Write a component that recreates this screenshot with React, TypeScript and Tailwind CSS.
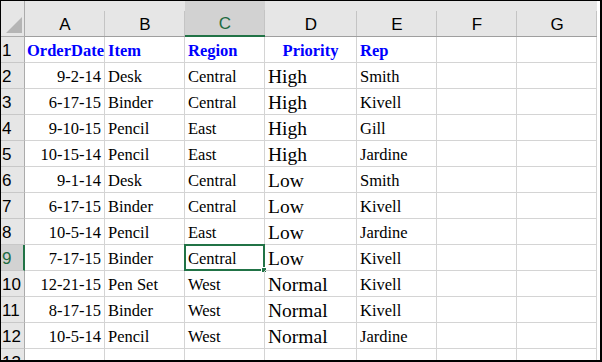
import React from "react";

const COLS = ["A", "B", "C", "D", "E", "F", "G"];

const ROWS: string[][] = [
  ["OrderDate", "Item", "Region", "Priority", "Rep"],
  ["9-2-14", "Desk", "Central", "High", "Smith"],
  ["6-17-15", "Binder", "Central", "High", "Kivell"],
  ["9-10-15", "Pencil", "East", "High", "Gill"],
  ["10-15-14", "Pencil", "East", "High", "Jardine"],
  ["9-1-14", "Desk", "Central", "Low", "Smith"],
  ["6-17-15", "Binder", "Central", "Low", "Kivell"],
  ["10-5-14", "Pencil", "East", "Low", "Jardine"],
  ["7-17-15", "Binder", "Central", "Low", "Kivell"],
  ["12-21-15", "Pen Set", "West", "Normal", "Kivell"],
  ["8-17-15", "Binder", "West", "Normal", "Kivell"],
  ["10-5-14", "Pencil", "West", "Normal", "Jardine"],
  ["", "", "", "", ""],
];

const SEL_COL = 2; // C
const SEL_ROW = 9;

const sans = "font-['Liberation_Sans',Arial,sans-serif]";
const serif = "font-['Liberation_Serif','Times_New_Roman',serif]";

function ColHeader({ label, selected }: { label: string; selected: boolean }) {
  return (
    <div
      className={`flex items-end justify-center pb-px text-[17px] leading-[20px] bg-no-repeat bg-right-bottom bg-[length:1px_25px] bg-[linear-gradient(#c4c4c4,#c4c4c4)] ${sans} ${
        selected
          ? "bg-[#d2d2d2] text-[#1e6b41] border-b-2 border-[#217346]"
          : "bg-[#e6e6e6] text-black border-b border-[#9f9f9f]"
      }`}
    >
      {label}
    </div>
  );
}

function RowHeader({ n }: { n: number }) {
  const selected = n === SEL_ROW;
  return (
    <div
      className={`flex items-end pl-px pb-px text-[17px] leading-[20px] border-b border-[#c8c8c8] ${sans} ${
        selected
          ? "bg-[#d2d2d2] text-[#1e6b41] border-r-2 border-r-[#217346]"
          : "bg-[#e6e6e6] text-black border-r border-r-[#ababab]"
      }`}
    >
      {n}
    </div>
  );
}

function Cell({ value, row, col }: { value: string; row: number; col: number }) {
  const isHeader = row === 1;
  const isPriority = col === 3;
  const selected = row === SEL_ROW && col === SEL_COL;

  let align = "justify-start pl-[3px]";
  if (col === 0) align = isHeader ? "justify-start pl-[2px]" : "justify-end pr-[3px]";
  if (isHeader && isPriority) align = "justify-center";

  const size = isPriority && !isHeader ? "text-[19.5px]" : "text-[16.5px]";
  const weight = isHeader ? "font-bold text-[#0000ff]" : "text-black";

  return (
    <div
      className={`relative flex items-end pb-px leading-[20px] whitespace-nowrap overflow-visible border-r border-b border-[#d4d4d4] ${serif} ${align} ${size} ${weight}`}
    >
      {value}
      {selected && (
        <>
          <div className="absolute -left-px -top-px -right-px -bottom-px border-2 border-[#217346] pointer-events-none" />
          <div className="absolute -right-[3px] -bottom-[3px] w-[6px] h-[6px] bg-[#217346] border border-white" />
        </>
      )}
    </div>
  );
}

export default function App() {
  return (
    <div className="w-[602px] h-[362px] bg-white border-l border-t border-r-2 border-b-2 border-black overflow-hidden">
      <div className="grid grid-cols-[24px_80px_80px_80px_92px_80px_80px_80px] grid-rows-[36px_repeat(13,26px)]">
        {/* corner */}
        <div className="flex items-end justify-end pr-[2px] pb-[3px] bg-[#e6e6e6] border-r border-b border-[#ababab]">
          <svg width="16" height="16" viewBox="0 0 16 16">
            <polygon points="16,0 16,16 0,16" fill="#b5b5b5" />
          </svg>
        </div>
        {COLS.map((c, i) => (
          <ColHeader key={c} label={c} selected={i === SEL_COL} />
        ))}

        {ROWS.map((r, ri) => (
          <React.Fragment key={ri}>
            <RowHeader n={ri + 1} />
            {COLS.map((_, ci) => (
              <Cell key={ci} value={r[ci] ?? ""} row={ri + 1} col={ci} />
            ))}
          </React.Fragment>
        ))}
      </div>
    </div>
  );
}
